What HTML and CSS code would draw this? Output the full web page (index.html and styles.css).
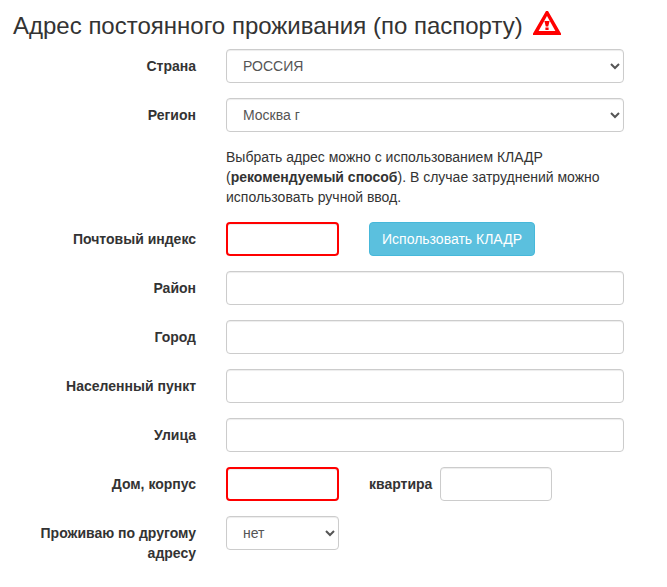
FILE: index.html
```html
<!DOCTYPE html>
<html lang="ru">
<head>
    <meta charset="utf-8">
    <title>Адрес постоянного проживания</title>
    <link rel="stylesheet" href="styles.css">
</head>
<body>
    <form class="form-horizontal">
        <h3>Адрес постоянного проживания (по паспорту)
            <svg class="warning" width="28" height="24" viewBox="0 0 28 24">
                <path d="M13 0 H15 L28 22.5 V24 H0 V22.5 Z M14 5 L5.6 20 H22.4 Z" fill="#f00" fill-rule="evenodd"/>
                <path d="M11.4 10 H16.6 L15.2 15.5 H12.8 Z M12.4 16.5 H15.6 V19 H12.4 Z" fill="#f00"/>
            </svg>
        </h3>

        <div class="form-group">
            <label for="country">Страна</label>
            <div class="field">
                <select id="country" class="form-control"><option>РОССИЯ</option></select>
            </div>
        </div>
        <div class="form-group">
            <label for="region">Регион</label>
            <div class="field">
                <select id="region" class="form-control"><option>Москва г</option></select>
            </div>
        </div>

        <p class="help">Выбрать адрес можно с использованием КЛАДР (<b>рекомендуемый способ</b>). В случае затруднений можно использовать ручной ввод.</p>

        <div class="form-group">
            <label for="zip">Почтовый индекс</label>
            <div class="field">
                <input type="text" id="zip" class="form-control short error">
                <button type="button" class="btn-info">Использовать КЛАДР</button>
            </div>
        </div>
        <div class="form-group">
            <label for="district">Район</label>
            <div class="field"><input type="text" id="district" class="form-control"></div>
        </div>
        <div class="form-group">
            <label for="city">Город</label>
            <div class="field"><input type="text" id="city" class="form-control"></div>
        </div>
        <div class="form-group">
            <label for="settlement">Населенный пункт</label>
            <div class="field"><input type="text" id="settlement" class="form-control"></div>
        </div>
        <div class="form-group">
            <label for="street">Улица</label>
            <div class="field"><input type="text" id="street" class="form-control"></div>
        </div>
        <div class="form-group">
            <label for="house">Дом, корпус</label>
            <div class="field">
                <input type="text" id="house" class="form-control short error">
                <label for="flat" class="flat-label">квартира</label>
                <input type="text" id="flat" class="form-control flat">
            </div>
        </div>
        <div class="form-group">
            <label for="other">Проживаю по другому адресу</label>
            <div class="field">
                <select id="other" class="form-control short"><option>нет</option></select>
            </div>
        </div>
    </form>
</body>
</html>
```

FILE: styles.css
```css
* {
    box-sizing: border-box;
}

body {
    margin: 0;
    font-family: "Liberation Sans", Arial, sans-serif;
    font-size: 14px;
    line-height: 20px;
    color: #333;
    background: #fff;
}

.form-horizontal {
    width: 624px;
    padding-top: 11px;
}

h3 {
    display: flex;
    align-items: flex-start;
    gap: 10px;
    height: 28px;
    margin: 0 0 10px 13px;
    font-size: 24px;
    font-weight: 400;
    line-height: 30px;
    white-space: nowrap;
}

.form-group {
    display: flex;
    margin-bottom: 15px;
}

label {
    width: 196px;
    padding: 7px 0 0 20px;
    font-weight: 700;
    text-align: right;
    flex: none;
}

.field {
    display: flex;
    width: 398px;
    margin-left: 30px;
}

.form-control {
    width: 100%;
    height: 34px;
    padding: 6px 12px;
    font-family: inherit;
    font-size: 14px;
    line-height: 20px;
    color: #555;
    background-color: #fff;
    border: 1px solid #ccc;
    border-radius: 4px;
    box-shadow: inset 0 1px 1px rgba(0, 0, 0, .075);
}

.short {
    width: 113px;
}

.flat {
    width: 112px;
}

.error {
    border: 2px solid #f00;
}

.flat-label {
    width: 63px;
    margin: 0 8px 0 30px;
    padding-left: 0;
}

.help {
    width: 398px;
    margin: 0 0 15px 226px;
}

.btn-info {
    width: 166px;
    height: 34px;
    margin-left: 30px;
    padding: 0;
    font-family: inherit;
    font-size: 14px;
    color: #fff;
    background: #5bc0de;
    border: 1px solid #46b8da;
    border-radius: 4px;
}
```
